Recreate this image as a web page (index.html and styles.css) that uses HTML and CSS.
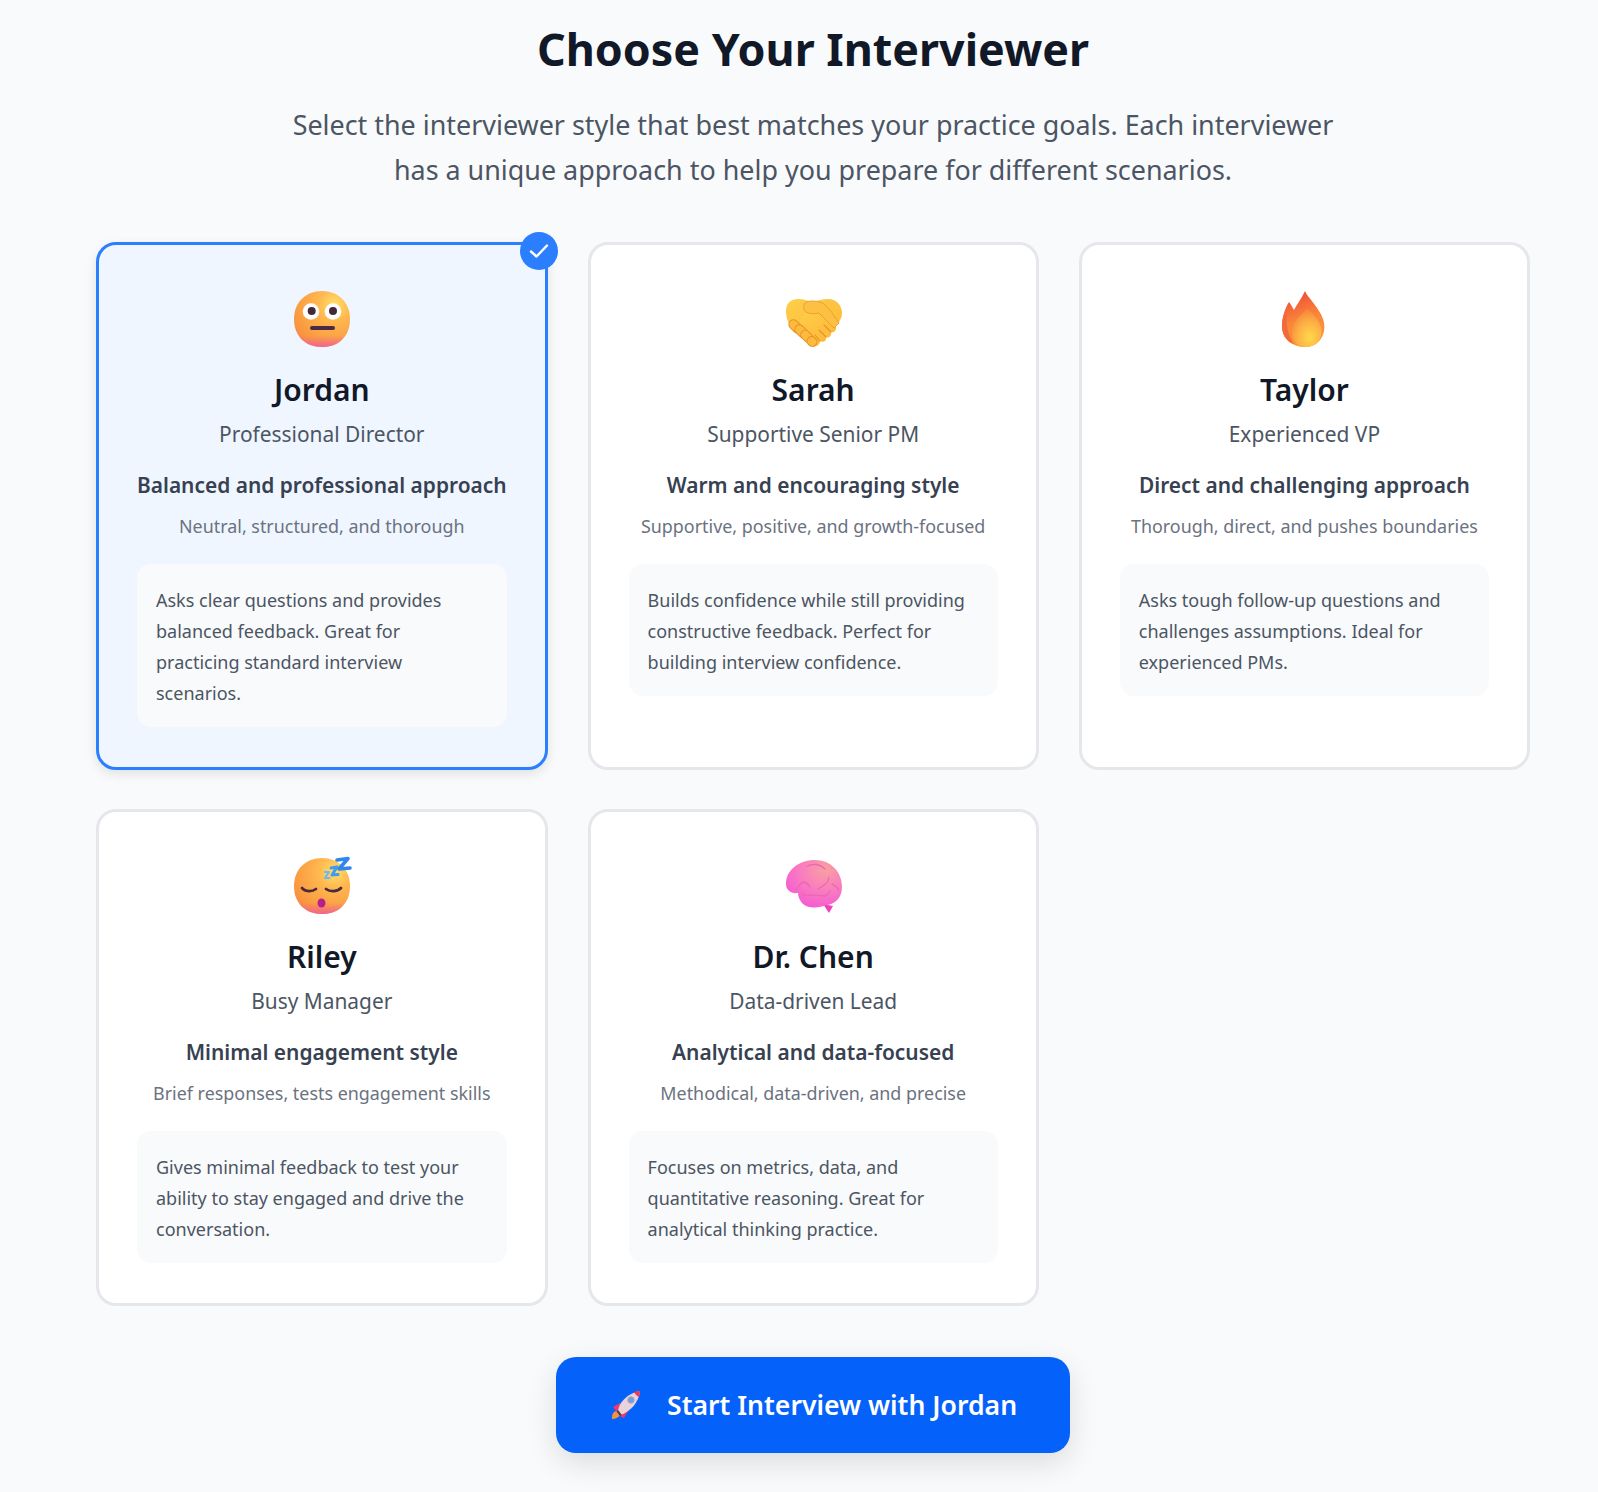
FILE: index.html
```html
<!DOCTYPE html>
<html lang="en">
<head>
<meta charset="utf-8">
<title>Choose Your Interviewer</title>
<link rel="stylesheet" href="styles.css">
</head>
<body>
<svg class="defs" width="0" height="0" aria-hidden="true">
  <defs>
    <radialGradient id="face" cx="0.72" cy="0.25" r="0.95">
      <stop offset="0" stop-color="#ffe06a"/><stop offset="0.3" stop-color="#ffb84f"/><stop offset="0.8" stop-color="#f9963f"/><stop offset="1" stop-color="#f47a5a"/>
    </radialGradient>
    <linearGradient id="chin" x1="0" y1="0.8" x2="0" y2="1">
      <stop offset="0" stop-color="#f0609a" stop-opacity="0"/><stop offset="1" stop-color="#f0609a" stop-opacity=".9"/>
    </linearGradient>
    <linearGradient id="hand" x1="0" y1="0" x2="0.8" y2="1">
      <stop offset="0" stop-color="#ffcf4a"/><stop offset="1" stop-color="#fcb638"/>
    </linearGradient>
    <linearGradient id="fireOut" x1="0.3" y1="0" x2="0.6" y2="1">
      <stop offset="0" stop-color="#f0483a"/><stop offset="0.5" stop-color="#fa8538"/><stop offset="1" stop-color="#fb9a3a"/>
    </linearGradient>
    <radialGradient id="fireIn" cx="0.6" cy="0.75" r="0.7">
      <stop offset="0" stop-color="#ffd84a"/><stop offset="0.6" stop-color="#fdb045"/><stop offset="1" stop-color="#f98a3c"/>
    </radialGradient>
    <radialGradient id="brain" cx="0.7" cy="0.2" r="0.9">
      <stop offset="0" stop-color="#f9a0a0"/><stop offset="0.5" stop-color="#f97cc0"/><stop offset="1" stop-color="#f556d4"/>
    </radialGradient>
  </defs>
</svg>
<main class="page">
  <h1 class="title">Choose Your Interviewer</h1>
  <p class="subtitle">Select the interviewer style that best matches your practice goals. Each interviewer<br>has a unique approach to help you prepare for different scenarios.</p>

  <section class="grid">
    <article class="card card-selected">
      <span class="check"><svg viewBox="0 0 24 24" width="24" height="24"><path d="M4 12.500 9.500 17.500 20 6.500" fill="none" stroke="#fff" stroke-width="2.400" stroke-linecap="round" stroke-linejoin="round"/></svg></span>
      <svg class="emoji" viewBox="0 0 60 60">
        <path d="M30 2C46 2 58 13 58 30 58 48 46 58 30 58 13 58 2 47 2 30 2 13 14 2 30 2Z" fill="url(#face)"/>
        <path d="M30 2C46 2 58 13 58 30 58 48 46 58 30 58 13 58 2 47 2 30 2 13 14 2 30 2Z" fill="url(#chin)"/>
        <circle cx="19" cy="22.500" r="8.300" fill="#fff"/><circle cx="41" cy="22.500" r="8.300" fill="#fff"/>
        <circle cx="19.700" cy="22" r="4" fill="#43273a"/><circle cx="41" cy="22" r="4" fill="#43273a"/>
        <rect x="18" y="37" width="25" height="4" rx="2" fill="#4a2a44"/>
      </svg>
      <h2 class="name">Jordan</h2>
      <p class="role">Professional Director</p>
      <p class="style">Balanced and professional approach</p>
      <p class="traits">Neutral, structured, and thorough</p>
      <p class="desc">Asks clear questions and provides balanced feedback. Great for practicing standard interview scenarios.</p>
    </article>

    <article class="card">
      <svg class="emoji" viewBox="0 0 60 60">
        <path d="M3 22C3 14 8 10 15 10 21 10 26 12 30 14 34 11 40 10 45 10 53 10 59 16 59 24 59 30 55 34 53 37L31 58 9 39C5 34 3 29 3 22Z" fill="url(#hand)"/>
        <path d="M22 23C27 25 31 25 36 24L53 38C54 42 50 44 48 43 49 46 46 50 43 48 44 52 40 54 37 52 37 56 33 58 30 57L13 40Z" fill="url(#hand)"/>
        <path d="M22 14C26 11 33 12 37 13 44 15 49 24 56 34L51 39 36 24C31 25 27 25 23 23 20 21 20 17 22 14Z" fill="#fdc043" stroke="#eea02e" stroke-width="1"/>
        <g fill="#fdbb3e" stroke="#e8922a" stroke-width="1.100">
          <rect x="5" y="33" width="15" height="9" rx="4.500" transform="rotate(45 12.500 37.500)"/>
          <rect x="11" y="38" width="15" height="9" rx="4.500" transform="rotate(45 18.500 42.500)"/>
          <rect x="17" y="43" width="14" height="9" rx="4.500" transform="rotate(45 24 47.500)"/>
          <rect x="24" y="48" width="10" height="9" rx="4.500" transform="rotate(45 29 52.500)"/>
        </g>
        <path d="M41 36 48 43M36 41 43 48M32 46 37 52" fill="none" stroke="#e8922a" stroke-width="1.100" stroke-linecap="round"/>
      </svg>
      <h2 class="name">Sarah</h2>
      <p class="role">Supportive Senior PM</p>
      <p class="style">Warm and encouraging style</p>
      <p class="traits">Supportive, positive, and growth-focused</p>
      <p class="desc">Builds confidence while still providing constructive feedback. Perfect for building interview confidence.</p>
    </article>

    <article class="card">
      <svg class="emoji" viewBox="0 0 60 60">
        <path d="M31 2C33 8 45 18 49 30 54 44 45 58 32 58 18 58 8 50 8 37 8 29 11 20 15 13 17 15 18 18 20 21 23 15 28 9 31 2Z" fill="url(#fireOut)"/>
        <path d="M15 13C12 24 10 40 20 55 11 52 8 44 8 37 8 29 11 20 15 13Z" fill="#f2693c"/>
        <path d="M18 44C18 34 25 27 33 20 43 27 50 38 47 47 45 54 40 58 32 58 24 58 18 52 18 44Z" fill="url(#fireIn)"/>
      </svg>
      <h2 class="name">Taylor</h2>
      <p class="role">Experienced VP</p>
      <p class="style">Direct and challenging approach</p>
      <p class="traits">Thorough, direct, and pushes boundaries</p>
      <p class="desc">Asks tough follow-up questions and challenges assumptions. Ideal for experienced PMs.</p>
    </article>

    <article class="card">
      <svg class="emoji" viewBox="0 0 60 60">
        <path d="M30 2C46 2 58 13 58 30 58 48 46 58 30 58 13 58 2 47 2 30 2 13 14 2 30 2Z" fill="url(#face)"/>
        <path d="M30 2C46 2 58 13 58 30 58 48 46 58 30 58 13 58 2 47 2 30 2 13 14 2 30 2Z" fill="url(#chin)"/>
        <path d="M10 32C13 36 20 36 24 33M34 33C38 36 45 36 49 32" fill="none" stroke="#4a2a3c" stroke-width="2.800" stroke-linecap="round"/>
        <ellipse cx="29.500" cy="47" rx="4" ry="4.500" fill="#b81f8e"/>
        <path d="M45 4 56 2.500 47 13 58 12" fill="none" stroke="#2f86ec" stroke-width="3.600" stroke-linejoin="round" stroke-linecap="round"/>
        <path d="M39 12 45 11 40 19 46 18.500" fill="none" stroke="#3f9af0" stroke-width="3" stroke-linejoin="round" stroke-linecap="round"/>
        <path d="M33 16 37 16 33 22 37.500 22" fill="none" stroke="#70b8f5" stroke-width="2.200" stroke-linejoin="round" stroke-linecap="round"/>
      </svg>
      <h2 class="name">Riley</h2>
      <p class="role">Busy Manager</p>
      <p class="style">Minimal engagement style</p>
      <p class="traits">Brief responses, tests engagement skills</p>
      <p class="desc">Gives minimal feedback to test your ability to stay engaged and drive the conversation.</p>
    </article>

    <article class="card">
      <svg class="emoji" viewBox="0 0 60 60">
        <path d="M40 48 50 50 46 57Z" fill="#f040c0"/>
        <path d="M3 28C3 14 16 4 32 4 48 4 59 16 59 31 59 42 52 48 44 49 36 52 24 53 19 47 16 43 15 40 15 37 8 38 3 34 3 28Z" fill="url(#brain)"/>
        <path d="M24 10C30 7 37 8 42 13M46 22C45 28 39 31 35 33M56 34C54 30 51 29 49 28M19 38C23 41 34 38 42 40 46 39 46 37 47 35M12 34C16 32 17 26 21 26 25 27 26 29 27 31" fill="none" stroke="#e86aae" stroke-width="1.300" stroke-linecap="round"/>
      </svg>
      <h2 class="name">Dr. Chen</h2>
      <p class="role">Data-driven Lead</p>
      <p class="style">Analytical and data-focused</p>
      <p class="traits">Methodical, data-driven, and precise</p>
      <p class="desc">Focuses on metrics, data, and quantitative reasoning. Great for analytical thinking practice.</p>
    </article>
  </section>

  <button class="start" type="button">
    <svg class="rocket" viewBox="0 0 30 30" width="30" height="30">
      <path d="M1 29C0.500 25 2 22 5 21L9 25C8 27 5 29 1 29Z" fill="#f5913a"/>
      <path d="M2 17 9 13 10 20 5 21Z" fill="#f0386a"/>
      <path d="M13 28 17 21 10 22 9 26Z" fill="#f0386a"/>
      <path d="M7 21C8 12 17 3 29 1 28 12 20 21 10 25Z" fill="#e8d3d8"/>
      <path d="M23 2C25 1.500 27 1 29 1 29 3 28.500 5 28 7 26 6 24 4 23 2Z" fill="#f0384e"/>
      <path d="M7 20 11 25 9 26 6 22Z" fill="#5a3a50"/>
      <circle cx="20" cy="10" r="3.200" fill="#6fa0e0" stroke="#a9a0c0"/>
    </svg>
    <span>Start Interview with Jordan</span>
  </button>
</main>
</body>
</html>
```
FILE: styles.css
```css
* { box-sizing: border-box; }
html, body { margin: 0; }
body {
  background: #f9fafb;
  color: #111827;
  font-family: "Noto Sans", "Open Sans", sans-serif;
}
.defs { position: absolute; }
.page {
  padding: 0 68px 40px 96px;
  display: flex;
  flex-direction: column;
  align-items: center;
}
.title {
  margin: 15px 0 0;
  font-size: 44.8px;
  line-height: 68px;
  font-weight: 700;
  color: #111827;
}
.subtitle {
  margin: 19px 0 0;
  font-size: 26.9px;
  line-height: 45px;
  text-align: center;
  color: #4b5563;
}
.grid {
  width: 100%;
  margin-top: 50px;
  display: grid;
  grid-template-columns: repeat(3, 1fr);
  gap: 38.5px 40px;
}
.card {
  position: relative;
  display: flex;
  flex-direction: column;
  align-items: center;
  padding: 44px 38px 40px;
  background: #fff;
  border: 3px solid #e5e7eb;
  border-radius: 20px;
}
.card-selected {
  background: #eff6ff;
  border-color: #2b7fff;
  box-shadow: 0 4px 12px rgba(0, 0, 0, .1);
}
.check {
  position: absolute;
  top: -13px;
  right: -13px;
  width: 38px;
  height: 38px;
  border-radius: 50%;
  background: #2b7fff;
  display: flex;
  align-items: center;
  justify-content: center;
}
.emoji { width: 60px; height: 60px; display: block; }
.name {
  margin: 19px 0 0;
  font-size: 30px;
  line-height: 44px;
  font-weight: 600;
  color: #111827;
}
.role {
  margin: 5px 0 0;
  font-size: 20.9px;
  line-height: 34px;
  color: #4b5563;
}
.style {
  margin: 17px 0 0;
  font-size: 20.9px;
  line-height: 34px;
  font-weight: 600;
  color: #374151;
  white-space: nowrap;
}
.traits {
  margin: 8px 0 0;
  font-size: 17.9px;
  line-height: 32px;
  color: #6b7280;
}
.desc {
  align-self: stretch;
  margin: 22px 0 0;
  padding: 21px 19px 18px;
  font-size: 18px;
  line-height: 31px;
  color: #4b5563;
  background: #f9fafb;
  border-radius: 14px;
}
.start {
  margin-top: 51px;
  width: 514px;
  height: 96px;
  display: flex;
  align-items: center;
  gap: 26px;
  padding: 0 40px 0 55px;
  border: 0;
  border-radius: 20px;
  background: #0461fa;
  color: #fff;
  font: 600 26.6px "Noto Sans", "Open Sans", sans-serif;
  white-space: nowrap;
  box-shadow: 0 10px 30px rgba(0, 0, 0, .12);
}
.rocket { flex: none; }
```
